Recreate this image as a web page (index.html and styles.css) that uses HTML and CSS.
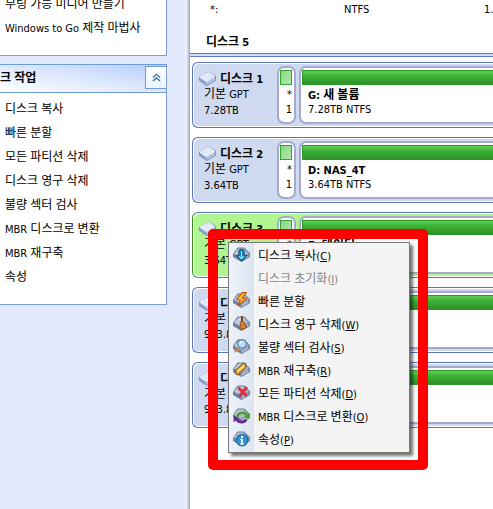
FILE: index.html
```html
<!DOCTYPE html>
<html lang="ko">
<head>
    <meta charset="UTF-8">
    <meta name="viewport" content="width=device-width, initial-scale=1.0">
    <title>디스크 관리</title>
    <link rel="stylesheet" href="styles.css">
</head>
<body>
    <svg class="defs" aria-hidden="true">
        <linearGradient id="metal" x1="0" y1="0" x2="1" y2="1">
            <stop offset="0" stop-color="#dde2ec"/>
            <stop offset="1" stop-color="#8d9bb8"/>
        </linearGradient>
        <symbol id="drive" viewBox="0 0 16 14">
            <path d="M.6 6 9 .8l6.4 4v3.8L7.4 13.4.6 8.8z" fill="#8ea5d2" stroke="#7c90bd"/>
            <path d="M1 5.800 9 1l6 4-7.800 5z" fill="#dfe9fa" stroke="#fff" stroke-width=".8"/>
            <path d="M7.200 10v3L15 8.500V5.200z" fill="#b4c6e8"/>
        </symbol>
        <symbol id="base" viewBox="0 0 16 16">
            <path d="M.5 7.500 4.500 2h6l5 5v3L8 14.500.5 10z" fill="#70809f" stroke="#75819c"/>
            <path d="M1 7.200 5 2.500h5.200L15 7l-7 4.500z" fill="url(#metal)"/>
            <path d="M8 12v2l6.500-4V8z" fill="#aebbd2"/>
        </symbol>
    </svg>

    <div class="window">
        <aside class="sidebar">
            <section class="panel">
                <ul class="tasks">
                    <li><a href="#">부팅 가능 미디어 만들기</a></li>
                    <li><a href="#"><span class="en">Windows to Go</span> 제작 마법사</a></li>
                </ul>
            </section>
            <section class="panel">
                <header class="panel-head">
                    <h2>크 작업</h2>
                    <button type="button" class="collapse" aria-label="접기">
                        <svg width="9" height="9" viewBox="0 0 10 10" fill="none" stroke="#3c6ea8" stroke-width="1.500"><path d="M1 5l4-3.500L9 5M1 9l4-3.500L9 9"/></svg>
                    </button>
                </header>
                <ul class="tasks">
                    <li><a href="#">디스크 복사</a></li>
                    <li><a href="#">빠른 분할</a></li>
                    <li><a href="#">모든 파티션 삭제</a></li>
                    <li><a href="#">디스크 영구 삭제</a></li>
                    <li><a href="#">불량 섹터 검사</a></li>
                    <li><a href="#"><span class="en">MBR</span> 디스크로 변환</a></li>
                    <li><a href="#"><span class="en">MBR</span> 재구축</a></li>
                    <li><a href="#">속성</a></li>
                </ul>
            </section>
        </aside>

        <main class="content">
            <table class="volumes">
                <tr><td>*:</td><td>NTFS</td><td>1.82TB</td></tr>
                <tr><th colspan="3" scope="rowgroup">디스크 <span class="en">5</span></th></tr>
            </table>
            <div class="splitter"></div>
            <div class="disks">
                <div class="disk">
                    <div class="info">
                        <h3><svg width="17" height="15"><use href="#drive"/></svg><span>디스크 <span class="en">1</span></span></h3>
                        <p>기본 <span class="en">GPT</span></p>
                        <p class="en">7.28TB</p>
                    </div>
                    <div class="part small"><div class="bar light"></div><p>*</p><p>1</p></div>
                    <div class="part"><div class="bar"></div><p><b><span class="en">G:</span> 새 볼륨</b></p><p class="en">7.28TB NTFS</p></div>
                </div>
                <div class="disk">
                    <div class="info">
                        <h3><svg width="17" height="15"><use href="#drive"/></svg><span>디스크 <span class="en">2</span></span></h3>
                        <p>기본 <span class="en">GPT</span></p>
                        <p class="en">3.64TB</p>
                    </div>
                    <div class="part small"><div class="bar light"></div><p>*</p><p>1</p></div>
                    <div class="part"><div class="bar"></div><p><b class="en">D: NAS_4T</b></p><p class="en">3.64TB NTFS</p></div>
                </div>
                <div class="disk selected">
                    <div class="info">
                        <h3><svg width="17" height="15"><use href="#drive"/></svg><span>디스크 <span class="en">3</span></span></h3>
                        <p>기본 <span class="en">GPT</span></p>
                        <p class="en">3.64TB</p>
                    </div>
                    <div class="part small"><div class="bar light"></div><p>*</p><p>1</p></div>
                    <div class="part"><div class="bar"></div><p><b><span class="en">E:</span> 데이터</b></p></div>
                </div>
                <div class="disk">
                    <div class="info">
                        <h3><svg width="17" height="15"><use href="#drive"/></svg><span>디스크</span></h3>
                        <p>기본</p>
                        <p class="en">953.8</p>
                    </div>
                    <div class="part small"><div class="bar light"></div></div>
                    <div class="part"><div class="bar"></div></div>
                </div>
                <div class="disk">
                    <div class="info">
                        <h3><svg width="17" height="15"><use href="#drive"/></svg><span>디스크</span></h3>
                        <p>기본</p>
                        <p class="en">953.8</p>
                    </div>
                    <div class="part small"><div class="bar light"></div></div>
                    <div class="part"><div class="bar"></div></div>
                </div>
            </div>
        </main>
    </div>

    <div class="highlight">
        <div class="menu" role="menu">
            <button type="button" role="menuitem">
                <svg viewBox="0 0 16 16"><use href="#base"/><path d="M5.500 4.500c1-1.500 4-1.500 5 0V9H13l-4.800 5L3.500 9h2z" fill="#1688b8" stroke="#12577e"/><path d="M8 5v7M5.500 9.500 8 12l2.500-2.500" fill="none" stroke="#8be3fa"/></svg>
                <span>디스크 복사<span class="en">(<u>C</u>)</span></span>
            </button>
            <button type="button" role="menuitem" disabled>
                <i></i>
                <span>디스크 초기화<span class="en">(<u>I</u>)</span></span>
            </button>
            <button type="button" role="menuitem">
                <svg viewBox="0 0 16 16"><use href="#base"/><path d="M8.500.6 3.500 7l3.500.8L4.500 13l8-6.800-3.700-.7L12.500.6z" fill="#ffbd32" stroke="#c0500c"/></svg>
                <span>빠른 분할</span>
            </button>
            <button type="button" role="menuitem">
                <svg viewBox="0 0 16 16"><use href="#base"/><path d="M8.500 1v6" stroke="#8b4215" stroke-width="1.800"/><path d="M7.500 6.500H10l3 5-4.500 2-2-1.500z" fill="#efa12b" stroke="#9d4a17"/><path d="M8.500 8.500v4M10 8.500l1 3" stroke="#b64c1e" stroke-width=".8"/></svg>
                <span>디스크 영구 삭제<span class="en">(<u>W</u>)</span></span>
            </button>
            <button type="button" role="menuitem">
                <svg viewBox="0 0 16 16"><use href="#base"/><path d="M6 9.500 1.500 13" stroke="#d68b3b" stroke-width="2"/><circle cx="8.500" cy="5.500" r="4" fill="#b7dff7" stroke="#5a87b8" stroke-width="1.200"/><path d="M6.500 5.500c0-1.300 1-2 2-2" fill="none" stroke="#fff"/></svg>
                <span>불량 섹터 검사<span class="en">(<u>S</u>)</span></span>
            </button>
            <button type="button" role="menuitem">
                <svg viewBox="0 0 16 16"><use href="#base"/><path d="M2.500 8.500 10 2l2 1v3l-7.500 7-2-1z" fill="#e9b23c" stroke="#8a5712"/><path d="m4.500 9.500 6-5" stroke="#ffe58a" stroke-width="1.500"/></svg>
                <span><span class="en">MBR</span> 재구축<span class="en">(<u>R</u>)</span></span>
            </button>
            <button type="button" role="menuitem">
                <svg viewBox="0 0 16 16"><use href="#base"/><path d="m5 3.500 8 7.500M13 3 6 11.500" stroke="#a8304a" stroke-width="2.600"/><path d="m5 3.500 8 7.500M13 3 6 11.500" stroke="#f02b3c" stroke-width="1.800"/></svg>
                <span>모든 파티션 삭제<span class="en">(<u>D</u>)</span></span>
            </button>
            <button type="button" role="menuitem">
                <svg viewBox="0 0 16 16"><use href="#base"/><path d="M4 9c1-4 7-5 9-1" fill="none" stroke="#48a533" stroke-width="2.500"/><path d="m15.800 5.500-.8 6-5-2z" fill="#48a533"/><path d="M12.500 12c-2 3-7 3-9 0" fill="none" stroke="#67278f" stroke-width="2.500"/><path d="M.3 14 1 8.500l5 2.500z" fill="#67278f"/></svg>
                <span><span class="en">MBR</span> 디스크로 변환<span class="en">(<u>O</u>)</span></span>
            </button>
            <button type="button" role="menuitem">
                <svg viewBox="0 0 16 16"><use href="#base"/><circle cx="8.500" cy="9.500" r="5.500" fill="#2e93c9" stroke="#1d6797"/><path d="M8.500 5.500v2M8.500 8.500V13M7 9h1.500M7 13h3" stroke="#fff" stroke-width="1.600"/></svg>
                <span>속성<span class="en">(<u>P</u>)</span></span>
            </button>
        </div>
    </div>
</body>
</html>
```
FILE: styles.css
```css
* {
    box-sizing: border-box;
}
body {
    margin: 0;
    height: 100vh;
    overflow: hidden;
    font-family: "Noto Sans", "Noto Sans CJK KR", sans-serif;
    font-size: 12px;
    color: #000;
    background-color: #fff;
}
h2, h3, p, ul {
    margin: 0;
    padding: 0;
    font-size: 12px;
}
.en, .small p, .volumes td {
    font-family: "DejaVu Sans Condensed", "Noto Sans", sans-serif;
    font-size: 11px;
}
.defs {
    position: absolute;
    width: 0;
    height: 0;
}
.window {
    display: flex;
    height: 100vh;
}

/* left task pane */
.sidebar {
    flex: 0 0 190px;
    padding-right: 20px;
    background: linear-gradient(to right, #e3e9fd 184px, #eef1fc 186px, #b8c3df 189px, #7f93c8 190px);
}
.panel {
    width: 167px;
    margin-bottom: 8px;
    background-color: #fff;
    border: 1px solid #7f9ed6;
    border-width: 0 1px 1px 0;
}
.tasks {
    list-style: none;
    padding: 4px 0 15px 5px;
}
.panel:first-child .tasks {
    margin-top: -12px;
}
.tasks li {
    height: 24px;
    line-height: 24px;
    white-space: nowrap;
}
.tasks a {
    color: #000;
    text-decoration: none;
}
.panel-head {
    display: flex;
    justify-content: space-between;
    height: 29px;
    border-top: 1px solid #6f9bd8;
    border-bottom: 1px solid #6f9bd8;
    background: linear-gradient(to bottom left, #b5ccff, #dce8fd 50%, #fff);
}
.panel-head h2 {
    line-height: 26px;
}
.collapse {
    display: flex;
    justify-content: center;
    align-items: center;
    width: 21px;
    height: 23px;
    margin-top: 1px;
    padding: 0;
    background: linear-gradient(#fff, #eaf4fc);
    border: 1px solid #6f9bd8;
    border-right: 0;
}

/* volume list and disk map */
.content {
    flex: 1;
    min-width: 0;
    overflow: hidden;
}
.volumes {
    width: 360px;
    height: 53px;
    border-collapse: collapse;
    table-layout: fixed;
}
.volumes td {
    width: 140px;
    height: 29px;
    padding: 0 0 10px 14px;
}
.volumes td:first-child {
    padding-left: 20px;
}
.volumes th {
    padding: 0 16px;
    text-align: left;
}
.splitter {
    height: 4px;
    background-color: #d3def6;
    border: 1px solid #5d78c0;
    border-width: 1px 0;
}
.disks {
    display: flex;
    flex-direction: column;
    gap: 9px;
    padding: 5px 0 0 2px;
}
.disk {
    display: flex;
    gap: 3px;
    height: 66px;
    padding: 3px 0 3px 5px;
    background-color: #cfdaf0;
    border: 1px solid #5b75bd;
    border-right: 0;
    border-radius: 6px 0 0 6px;
    box-shadow: inset 1px 1px #fff, inset 0 -1px #fff;
}
.selected {
    background-color: #b1f593;
    border-left-color: #3c8c1c;
}
.info {
    flex: 0 0 76px;
    padding: 4px 0 0 6px;
    white-space: nowrap;
}
.info h3 {
    display: flex;
    align-items: center;
    gap: 4px;
    height: 16px;
    margin-left: -5px;
}
.info p {
    line-height: 16px;
}
.part {
    flex: 1;
    padding: 2px 0 0 1px;
    background-color: #fff;
    border: 2px solid #a5aace;
    border-right: 0;
    border-radius: 7px 0 0 7px;
    white-space: nowrap;
}
.part p {
    height: 15px;
    line-height: 15px;
    padding-left: 6px;
}
.small {
    flex: 0 0 19px;
    padding: 2px 2px 0 1px;
    border-right: 2px solid #a5aace;
    border-radius: 7px;
}
.part.small p {
    padding: 0;
    text-align: right;
}
.bar {
    height: 15px;
    margin-bottom: 2px;
    background: linear-gradient(#5fd055, #3eb437 35%, #2f9128);
    border: 1px solid #2f9a2a;
    border-right: 0;
}
.light {
    width: 12px;
    background: linear-gradient(to bottom right, #85d982, #b2e9af);
    border: 1px solid #35a52d;
}

/* marker frame with the popup menu inside */
.highlight {
    position: absolute;
    left: 208px;
    top: 229px;
    padding: 3px 8px 7px 10px;
    border: 10px solid #f00;
    border-radius: 5px;
}
.menu {
    width: 182px;
    padding: 0 0 2px;
    background: linear-gradient(to right, #eef3fa, #dbe4ef 25px, #f4f4f4 25px);
    border: 1px solid #777;
    box-shadow: 3px 3px 3px rgba(0, 0, 0, 0.55);
}
.menu button {
    display: flex;
    align-items: center;
    gap: 8px;
    width: 100%;
    height: 23px;
    padding: 0 4px;
    background: none;
    border: 0;
    font: inherit;
    color: #000;
    white-space: nowrap;
}
.menu button:disabled {
    color: #858585;
}
.menu svg, .menu i {
    flex: none;
    width: 17px;
    height: 17px;
}
```
